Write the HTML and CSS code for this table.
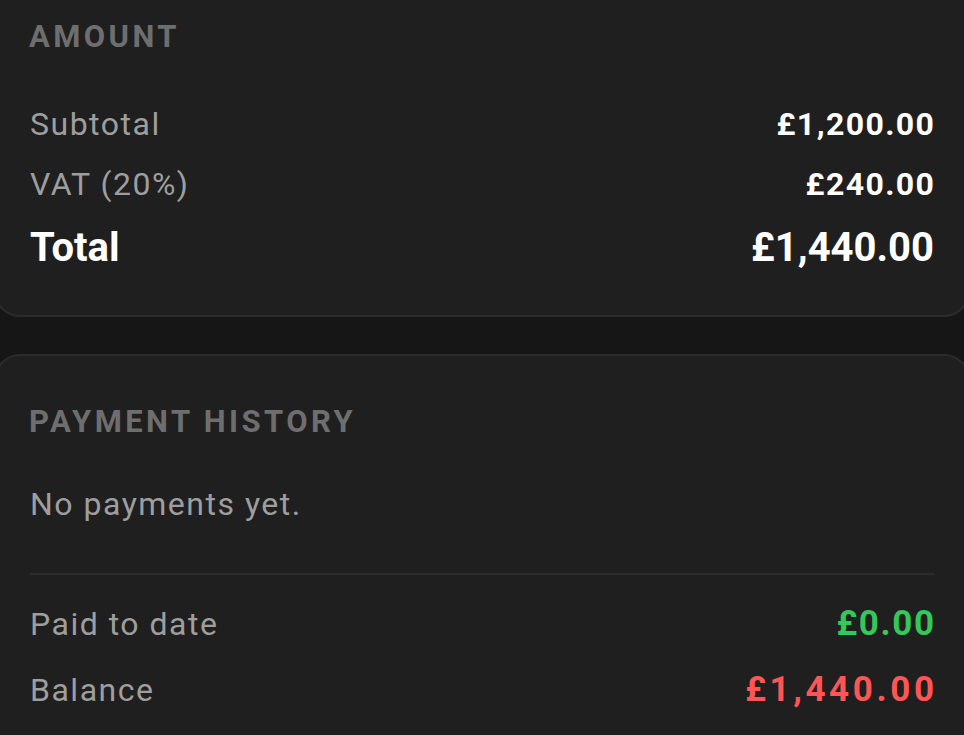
FILE: index.html
```html
<!DOCTYPE html>
<html lang="en">
<head>
<meta charset="utf-8">
<title>Invoice amount</title>
<link rel="stylesheet" href="styles.css">
</head>
<body>
<main class="screen">
  <section class="card card--first">
    <h2 class="section-title">AMOUNT</h2>
    <div class="row">
      <span class="label">Subtotal</span>
      <span class="value">£1,200.00</span>
    </div>
    <div class="row">
      <span class="label">VAT (20%)</span>
      <span class="value">£240.00</span>
    </div>
    <div class="row row--total">
      <span class="label label--total">Total</span>
      <span class="value value--total">£1,440.00</span>
    </div>
  </section>
  <section class="card">
    <h2 class="section-title">PAYMENT HISTORY</h2>
    <p class="empty">No payments yet.</p>
    <hr class="divider">
    <div class="row">
      <span class="label">Paid to date</span>
      <span class="value value--paid">£0.00</span>
    </div>
    <div class="row row--balance">
      <span class="label">Balance</span>
      <span class="value value--due">£1,440.00</span>
    </div>
  </section>
</main>
</body>
</html>
```
FILE: styles.css
```css
html, body {
  margin: 0;
  padding: 0;
  background: #161616;
  overflow: hidden;
}
body {
  font-family: Roboto, "Noto Sans", "Liberation Sans", sans-serif;
  color: #ffffff;
}
.screen {
  display: flex;
  flex-direction: column;
  gap: 37px;
  margin: -31px -6px 0;
}
.card {
  background: #1f1f1f;
  border: 2px solid #2b2b2b;
  border-radius: 26px;
  padding: 46px 34px 33px;
}
.section-title {
  margin: 0 0 0 -1px;
  font-size: 31px;
  line-height: 40px;
  font-weight: 700;
  letter-spacing: 3.4px;
  color: #6e6e6e;
}
.card--first .section-title {
  margin-bottom: 37px;
}
.row {
  display: flex;
  justify-content: space-between;
  align-items: baseline;
  line-height: 60px;
}
.label {
  font-size: 32px;
  letter-spacing: 1.5px;
  color: #9e9e9e;
}
.value {
  font-size: 32px;
  font-weight: 700;
  letter-spacing: 1.4px;
  margin-right: -1.4px;
  color: #ffffff;
}
.row--total {
  line-height: 68px;
}
.label--total,
.value--total {
  font-size: 40px;
  font-weight: 700;
  letter-spacing: 0;
  margin-right: 0;
  color: #ffffff;
}
.empty {
  margin: 32px 0 0;
  font-size: 32px;
  line-height: 60px;
  letter-spacing: 1.5px;
  color: #9e9e9e;
}
.divider {
  margin: 39px 0 19px;
  border: 0;
  height: 2px;
  background: #2c2c2c;
}
.value--paid {
  font-size: 35px;
  letter-spacing: 1.6px;
  margin-right: -1.6px;
  color: #34c759;
}
.row--balance {
  line-height: 72px;
}
.value--due {
  font-size: 35px;
  letter-spacing: 3.6px;
  margin-right: -3.6px;
  color: #ff5555;
}
```
